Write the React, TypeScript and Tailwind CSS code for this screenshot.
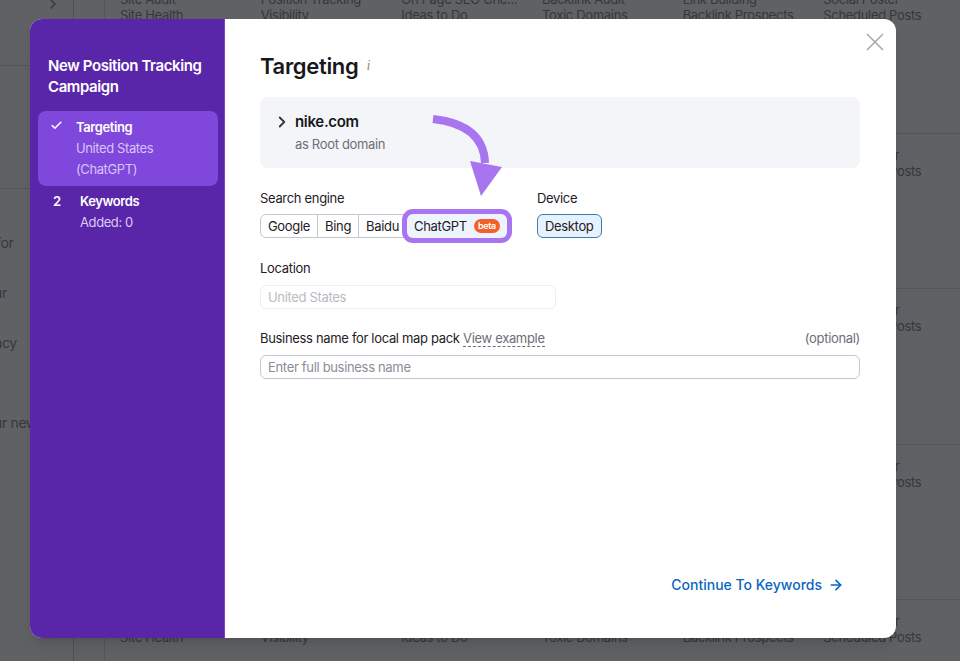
import { ArrowRight, Check, ChevronRight } from "lucide-react";

const columns = [
  ["Site Audit", "Site Health"],
  ["Position Tracking", "Visibility"],
  ["On Page SEO Che...", "Ideas to Do"],
  ["Backlink Audit", "Toxic Domains"],
  ["Link Building", "Backlink Prospects"],
  ["Social Poster", "Scheduled Posts"],
];

const Background = () => {
  return (
    <div className="flex h-full w-full overflow-hidden bg-[#606165] text-[13px] leading-4 tracking-tight text-[#36373b]">
      <div className="flex w-18.5 shrink-0 flex-col border-r border-[#4f5054] text-sm leading-5 whitespace-nowrap">
        <div className="flex h-16.5 shrink-0 justify-end border-b border-[#55565a] pr-3">
          <ChevronRight size={16} className="-mt-1" />
        </div>
        <div className="h-30.75 shrink-0 border-b border-[#55565a]" />
        <div className="mt-11 -ml-1">for</div>
        <div className="mt-7.5 -ml-1.5">ur</div>
        <div className="mt-7.5 -ml-1.5">ncy</div>
        <div className="mt-15 -ml-1.5">ur new</div>
      </div>
      <div className="-mt-5.5 flex-1 pl-7.5">
        {[0, 1, 2, 3, 4].map((row) => (
          <div key={row} className="h-[155.5px] border-b border-l border-[#55565a] pt-3.25">
            <div className="-mr-1 grid grid-cols-6 pl-3.75">
              {columns.map(([title, sub]) => (
                <div key={title}>
                  <div>{title}</div>
                  <div>{sub}</div>
                </div>
              ))}
            </div>
          </div>
        ))}
      </div>
    </div>
  );
};

const Sidebar = () => {
  return (
    <div className="w-48.75 shrink-0 border-r border-[#7c3fd0] bg-[#5a26a9] pt-9 pr-1.5 pl-2 tracking-tight text-white">
      <h2 className="px-2.5 text-[15px] leading-[21px] font-semibold">New Position Tracking Campaign</h2>
      <div className="mt-3.5 flex rounded-lg bg-[#7f47dc] py-1.5 pl-3 text-[13px] leading-[21px]">
        <div className="w-6.5 pt-0.5">
          <Check size={13} strokeWidth={3} />
        </div>
        <div>
          <div className="font-semibold">Targeting</div>
          <div className="text-[#d8c4f7]">United States</div>
          <div className="text-[#d8c4f7]">(ChatGPT)</div>
        </div>
      </div>
      <div className="flex pt-1.25 pl-3.75 text-[13px] leading-[21px]">
        <div className="w-6.75 font-semibold">2</div>
        <div>
          <div className="font-semibold">Keywords</div>
          <div className="text-[#dcc9f7]">Added: 0</div>
        </div>
      </div>
    </div>
  );
};

const Targeting = () => {
  return (
    <div className="relative flex flex-1 flex-col pt-7.75 pr-9 pb-10.75 pl-8.75 text-[13px] leading-5 tracking-tight text-[#1f2024]">
      <button className="absolute top-3.5 right-3 text-[#a4a6ab]">
        <svg width="18" height="18" viewBox="0 0 18 18" fill="none" stroke="currentColor" strokeWidth="1.5">
          <path d="M1 1L17 17M17 1L1 17" />
        </svg>
      </button>

      <h1 className="flex items-center gap-2 text-[22px] leading-8 font-semibold text-[#17181c]">
        Targeting
        <span className="font-['Liberation_Serif',serif] text-sm font-normal text-[#8b8d93] italic">i</span>
      </h1>

      <div className="mt-3.75 flex h-17.75 gap-1 rounded-lg bg-[#f4f5f9] pt-3.25 pl-3.25">
        <ChevronRight size={18} strokeWidth={2.5} className="mt-0.75 text-[#36373b]" />
        <div>
          <div className="text-[15px] leading-6 font-semibold text-[#17181c]">nike.com</div>
          <div className="text-[#6c6e79]">as Root domain</div>
        </div>
      </div>

      <div className="mt-5 flex gap-7.5">
        <div>
          <div>Search engine</div>
          <div className="mt-1.5 flex h-6 items-stretch">
            <div className="flex items-center rounded-l-md border border-[#c4c7cf] px-1.75">Google</div>
            <div className="-ml-px flex items-center border border-[#c4c7cf] px-1.75">Bing</div>
            <div className="-ml-px flex items-center border border-[#c4c7cf] px-1.75">Baidu</div>
            <div className="relative z-10 flex items-center gap-1.75 rounded-md bg-[#eef4fd] px-1.75 ring-[5px] ring-[#a974f0]">
              ChatGPT
              <span className="rounded-full bg-[#f4602a] px-1 text-[9px] leading-3.5 font-semibold text-white">beta</span>
            </div>
          </div>
        </div>
        <div>
          <div>Device</div>
          <div className="mt-1.5 flex h-6 items-center rounded-md border border-[#3a7cb8] bg-[#e6f2fd] px-1.75">Desktop</div>
        </div>
      </div>

      <div className="mt-5">Location</div>
      <div className="mt-1.75 flex h-6 w-74 items-center rounded-md border border-[#eceef2] px-1.75 text-[#b9bbc2]">United States</div>

      <div className="mt-4.75 flex justify-between">
        <div>
          Business name for local map pack{" "}
          <span className="border-b border-dashed border-[#6c6e79] text-[#6c6e79]">View example</span>
        </div>
        <div className="text-[#6c6e79]">(optional)</div>
      </div>
      <div className="mt-1.75 flex h-6 items-center rounded-md border border-[#c4c7cf] px-1.75 text-[#8b8d96]">Enter full business name</div>

      <div className="mt-auto flex items-center justify-end gap-1.5 pr-4 text-sm leading-5 font-medium tracking-normal text-[#0a66c2]">
        Continue To Keywords
        <ArrowRight size={16} strokeWidth={2.5} />
      </div>

      <svg className="absolute top-24 left-51.25 h-21 w-20" viewBox="0 0 80 84" fill="none">
        <path d="M3 4C30 7 54 18 55 48" stroke="#a974f0" strokeWidth="8" />
        <path d="M40 46L72 52L51 81Z" fill="#a974f0" />
      </svg>
    </div>
  );
};

const App = () => {
  return (
    <div className="relative h-screen w-full overflow-hidden font-['Inter',sans-serif]">
      <Background />
      <div className="absolute top-[19px] left-7.5 flex h-[619px] w-[866px] overflow-hidden rounded-xl bg-white shadow-lg">
        <Sidebar />
        <Targeting />
      </div>
    </div>
  );
};

export default App;
